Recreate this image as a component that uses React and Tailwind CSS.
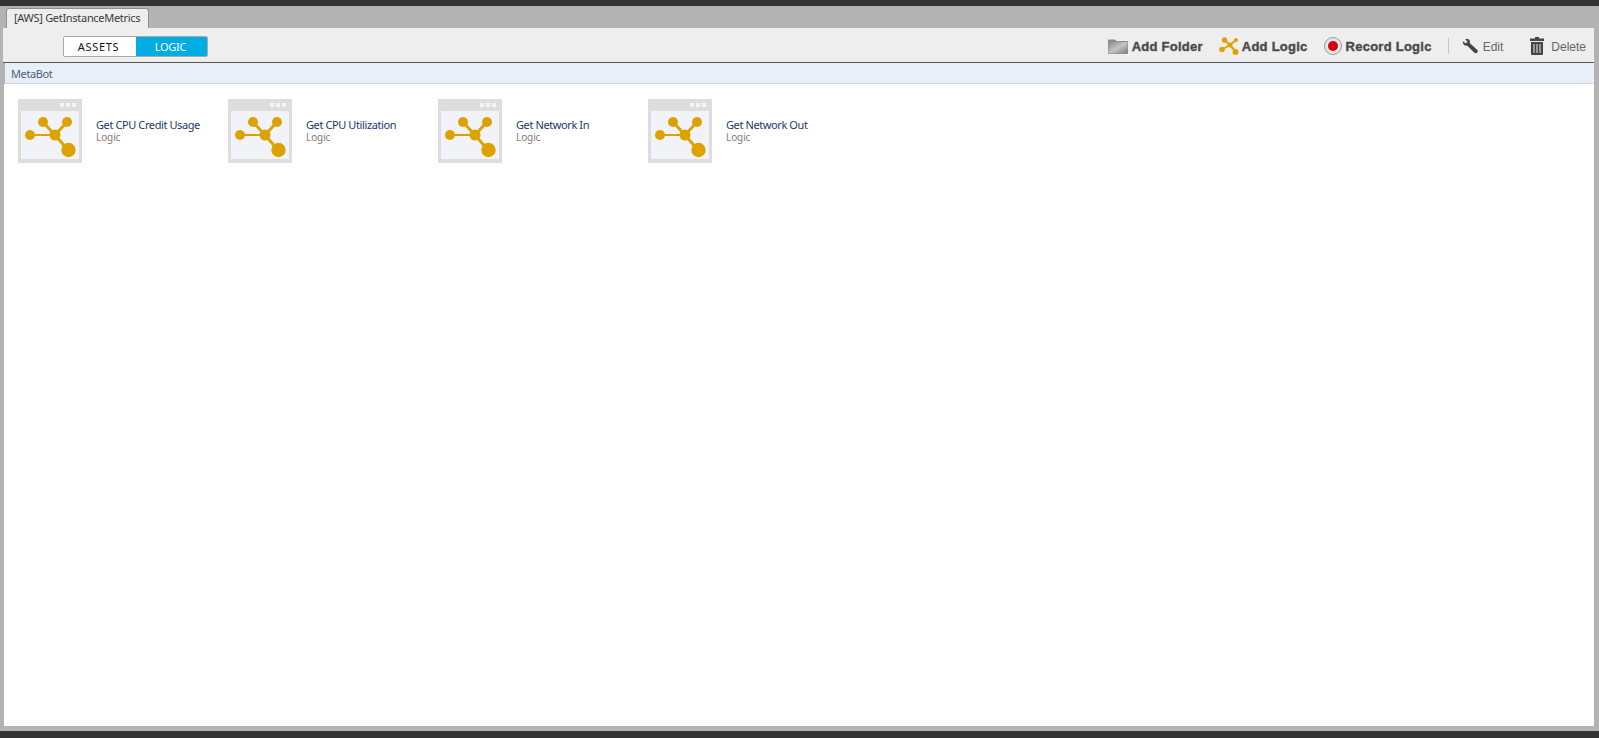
import React from 'react';

const LOGICS = ['Get CPU Credit Usage', 'Get CPU Utilization', 'Get Network In', 'Get Network Out'];

const GOLD = '#dca300';

const LogicIcon = () => (
  <div className="relative w-16 h-16 bg-[#dddddd] pt-3 px-[3px] pb-1 shrink-0">
    <div className="absolute top-1 right-[6px] flex gap-[2px]">
      <span className="w-[4px] h-[4px] bg-[#f4f4f4]"></span>
      <span className="w-[4px] h-[4px] bg-[#f4f4f4]"></span>
      <span className="w-[4px] h-[4px] bg-[#f4f4f4]"></span>
    </div>
    <svg viewBox="0 0 58 48" className="w-[58px] h-12 bg-[#f2f3f9] block">
      <g stroke={GOLD} strokeWidth="2">
        <line x1="9" y1="24" x2="34" y2="24" />
        <line x1="22" y1="11" x2="34" y2="24" strokeWidth="3" />
        <line x1="46" y1="11" x2="34" y2="24" strokeWidth="3" />
        <line x1="34" y1="24" x2="47" y2="39" strokeWidth="3" />
      </g>
      <circle cx="9" cy="24" r="5" fill={GOLD} />
      <circle cx="22" cy="11" r="5" fill={GOLD} />
      <circle cx="46" cy="11" r="5" fill={GOLD} />
      <circle cx="34" cy="24" r="5.5" fill={GOLD} />
      <circle cx="47.5" cy="39" r="7.2" fill={GOLD} />
    </svg>
  </div>
);

const FolderIcon = () => (
  <svg viewBox="0 0 20 15" className="w-5 h-[15px]">
    <defs>
      <linearGradient id="fold" x1="0" y1="0" x2="1" y2="1">
        <stop offset="0" stopColor="#8a8a8a" />
        <stop offset="0.5" stopColor="#c4c4c4" />
        <stop offset="1" stopColor="#7d7d7d" />
      </linearGradient>
    </defs>
    <path d="M1 0.5h6l1.5 1.5H19a1 1 0 0 1 1 1V14a1 1 0 0 1-1 1H1a1 1 0 0 1-1-1V1.5a1 1 0 0 1 1-1z" fill="#8c8c8c" />
    <rect x="0.5" y="3" width="19" height="11.5" rx="1" fill="url(#fold)" />
  </svg>
);

const SmallLogicIcon = () => (
  <svg viewBox="0 0 20 18" className="w-5 h-[18px]">
    <g stroke={GOLD} strokeWidth="2">
      <line x1="3" y1="12.5" x2="11" y2="8" />
      <line x1="5.5" y1="3" x2="11" y2="8" />
      <line x1="17" y1="3" x2="11" y2="8" />
      <line x1="11" y1="8" x2="16.5" y2="14.5" />
    </g>
    <circle cx="3" cy="12.5" r="2.8" fill={GOLD} />
    <circle cx="5.5" cy="3" r="2.7" fill={GOLD} />
    <circle cx="17" cy="3" r="2" fill={GOLD} />
    <circle cx="11" cy="8" r="2.4" fill={GOLD} />
    <circle cx="16.5" cy="15" r="3" fill={GOLD} />
  </svg>
);

const RecordIcon = () => (
  <div className="w-[18px] h-[18px] rounded-full border border-[#9a9a9a] bg-[#e6e6e6] flex items-center justify-center">
    <span className="w-[10px] h-[10px] rounded-full bg-[#d4000f]"></span>
  </div>
);

const WrenchIcon = () => (
  <svg viewBox="0 0 16 16" className="w-4 h-4">
    <path d="M1 3.2 3.6 5.6 5.6 3.8 3.2 1.2C5.2 0 7.6 1 7.9 3.2c.1.7 0 1.2-.2 1.7l7.4 6.9c1 1 .9 2-.1 2.9-.8.8-1.9.8-2.8-.1L5.3 7.7c-2.6.7-5.2-1.8-4.3-4.5z" fill="#444444" />
  </svg>
);

const TrashIcon = () => (
  <svg viewBox="0 0 14 18" className="w-[14px] h-[18px]">
    <path d="M5 0h4v1.4h5V4H0V1.4h5z" fill="#444444" />
    <path d="M1 5h12v12a1 1 0 0 1-1 1H2a1 1 0 0 1-1-1z" fill="#444444" />
    <path d="M4 7v9M7 7v9M10 7v9" stroke="#dddddd" strokeWidth="1.1" />
  </svg>
);

const boldText = "mt-[2px] text-[13px] font-bold text-[#4a4a4a] tracking-[0.25px] [-webkit-text-stroke:0.4px_#4a4a4a] font-['Liberation_Sans',sans-serif]";
const thinText = "mt-[2px] text-[12px] text-[#666666] font-['Liberation_Sans',sans-serif]";

export default function App() {
  return (
    <div className="h-[738px] w-full overflow-hidden bg-[#333333] pt-[6px] pb-[7px] flex flex-col font-['Noto_Sans',sans-serif]">
      <div className="flex-1 min-h-0 bg-[#b3b3b3] pl-[3px] pr-[5px] pb-[5px] flex flex-col">
        {/* tab strip */}
        <div className="h-[22px] pl-[3px] flex items-end shrink-0">
          <div className="h-[20px] w-[143px] bg-[#eeeeee] border border-b-0 border-[#8f8f8f] rounded-t-[3px] pl-[7px] text-[11px] leading-[18px] tracking-[-0.3px] whitespace-nowrap text-[#3a3a3a]">
            [AWS] GetInstanceMetrics
          </div>
        </div>

        {/* toolbar */}
        <div className="h-[35px] shrink-0 bg-[#eeeeee] border-b border-[#555555] flex items-center pt-[2px] pl-[60px] pr-[8px]">
          <div className="flex h-[21px] w-[145px] border border-[#a9a9a9] rounded-[2px] text-[11px] leading-[19px] text-center overflow-hidden">
            <div className="flex-1 bg-white text-[#111111] tracking-[0.7px] pr-[3px]">ASSETS</div>
            <div className="flex-1 bg-[#00ade2] text-white tracking-[-0.25px] pr-[2px]">LOGIC</div>
          </div>
          <div className="ml-auto flex items-center">
            <FolderIcon />
            <span className={`ml-1 ${boldText}`}>Add Folder</span>
            <div className="ml-4"><SmallLogicIcon /></div>
            <span className={`ml-[3px] ${boldText}`}>Add Logic</span>
            <div className="ml-4"><RecordIcon /></div>
            <span className={`ml-1 ${boldText}`}>Record Logic</span>
            <div className="ml-4 w-px h-4 bg-[#c4c4c4]"></div>
            <div className="ml-[13px]"><WrenchIcon /></div>
            <span className={`ml-[5px] ${thinText}`}>Edit</span>
            <div className="ml-[27px]"><TrashIcon /></div>
            <span className={`ml-[7px] ${thinText}`}>Delete</span>
          </div>
        </div>

        {/* breadcrumb */}
        <div className="ml-[2px] h-[21px] shrink-0 bg-[#e9eff6] border-b border-[#cfd9ea] pl-[6px] text-[11px] leading-[22px] tracking-[-0.4px] text-[#4a5f7d]">
          MetaBot
        </div>

        {/* logic list */}
        <div className="ml-px flex-1 min-h-0 bg-white pt-[15px] pl-[14px] flex items-start">
          {LOGICS.map((name) => (
            <div key={name} className="w-[210px] flex items-center shrink-0">
              <LogicIcon />
              <div className="ml-[14px] mt-[-1px]">
                <div className="text-[11px] leading-[13px] tracking-[-0.4px] text-[#23396b]">{name}</div>
                <div className="text-[10px] leading-[12px] tracking-[-0.1px] text-[#8a7a78]">Logic</div>
              </div>
            </div>
          ))}
        </div>
      </div>
    </div>
  );
}
